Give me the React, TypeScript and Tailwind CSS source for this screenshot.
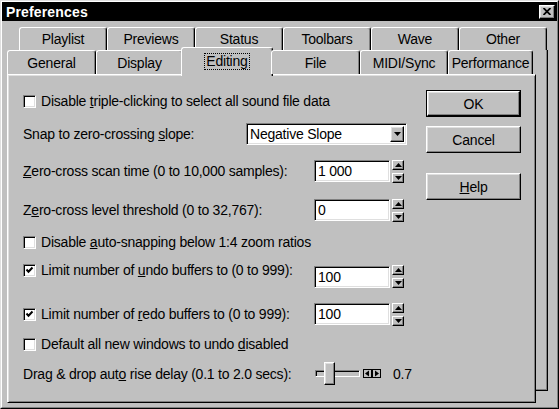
import { ReactNode } from "react";

const raised =
  "border border-t-white border-l-white border-r-black border-b-black shadow-[inset_-1px_-1px_0_#808080,inset_1px_1px_0_#dfdfdf]";
const raisedSmall =
  "border border-t-white border-l-white border-r-black border-b-black shadow-[inset_-1px_-1px_0_#808080]";
const sunken =
  "border border-t-[#808080] border-l-[#808080] border-r-white border-b-white shadow-[inset_1px_1px_0_#000,inset_-1px_-1px_0_#dfdfdf]";

const backTabs = ["Playlist", "Previews", "Status", "Toolbars", "Wave", "Other"];

const frontTabs = [
  { label: "General", w: "w-[89px]" },
  { label: "Display", w: "w-[87px]" },
  { label: "Editing", w: "w-[92px]", selected: true },
  { label: "File", w: "w-[89px]" },
  { label: "MIDI/Sync", w: "w-[88px]" },
  { label: "Performance", w: "w-[85px]" },
];

function Checkbox({ checked }: { checked?: boolean }) {
  return (
    <div className={`w-[13px] h-[13px] shrink-0 bg-white flex items-center justify-center ${sunken}`}>
      {checked && (
        <svg width="9" height="9" viewBox="0 0 9 9">
          <path d="M1.5 3.5 L3.5 5.8 L7.5 1.5" stroke="black" strokeWidth="2" fill="none" />
        </svg>
      )}
    </div>
  );
}

function Arrow({ dir }: { dir: "up" | "down" }) {
  return (
    <svg width="7" height="4" viewBox="0 0 7 4">
      <path d={dir === "up" ? "M3.5 0 L7 4 L0 4Z" : "M0 0 L7 0 L3.5 4Z"} fill="black" />
    </svg>
  );
}

function Spinner() {
  return (
    <div className="ml-[2px] flex flex-col gap-[3px]">
      <div className={`w-[12px] h-[10px] bg-[#c0c0c0] flex items-center justify-center ${raisedSmall}`}>
        <Arrow dir="up" />
      </div>
      <div className={`w-[12px] h-[10px] bg-[#c0c0c0] flex items-center justify-center ${raisedSmall}`}>
        <Arrow dir="down" />
      </div>
    </div>
  );
}

function NumberField({ value }: { value: string }) {
  return (
    <div className="flex items-center">
      <div className={`w-[76px] h-[22px] bg-white flex items-center pl-[3px] ${sunken}`}>{value}</div>
      <Spinner />
    </div>
  );
}

function CheckRow({ checked, children }: { checked?: boolean; children: ReactNode }) {
  return (
    <div className="flex items-center gap-[5px] h-[14px]">
      <Checkbox checked={checked} />
      <span className="whitespace-nowrap">{children}</span>
    </div>
  );
}

function Button({ children, def }: { children: ReactNode; def?: boolean }) {
  if (def) {
    return (
      <div className="w-[95px] h-[27px] border border-black">
        <div className={`w-full h-full flex items-center justify-center ${raised}`}>{children}</div>
      </div>
    );
  }
  return (
    <div className={`w-[95px] h-[27px] flex items-center justify-center ${raised}`}>{children}</div>
  );
}

export default function App() {
  return (
    <div className="w-[559px] h-[409px] bg-[#c0c0c0] text-black text-[14px] leading-[16px] tracking-[-0.22px] font-['Liberation_Sans',Arial,sans-serif] border border-t-[#dfdfdf] border-l-[#dfdfdf] border-r-black border-b-black">
      <div className="w-full h-full border border-t-white border-l-white border-r-[#808080] border-b-[#808080] flex flex-col">
        {/* Title bar */}
        <div className="h-[19px] bg-black flex items-center justify-between pl-[4px] pr-[2px]">
          <span className="text-white font-bold tracking-[0.15px]">Preferences</span>
          <div className={`w-[16px] h-[14px] bg-[#c0c0c0] flex items-center justify-center ${raised}`}>
            <svg width="8" height="7" viewBox="0 0 8 7">
              <path d="M0.5 0 L7.5 7 M7.5 0 L0.5 7" stroke="black" strokeWidth="1.8" />
            </svg>
          </div>
        </div>

        <div className="relative flex-1">
          {/* back row frame */}
          <div className="absolute left-[17px] top-[29px] w-[529px] h-[341px] border-r border-b border-r-black border-b-black shadow-[inset_-1px_-1px_0_#808080]" />

          {/* back tab row */}
          <div className="relative flex ml-[17px] mt-[6px] h-[23px]">
            {backTabs.map((t) => (
              <div
                key={t}
                className="w-[88px] h-[23px] flex items-center justify-center border-t border-l border-r border-t-white border-l-white border-r-black rounded-tl-[3px] rounded-tr-[3px] shadow-[inset_-1px_0_0_#808080] bg-[#c0c0c0]"
              >
                {t}
              </div>
            ))}
          </div>

          {/* front tab row */}
          <div className="relative z-10 flex items-end ml-[5px] h-[24px]">
            {frontTabs.map((t) =>
              t.selected ? (
                <div
                  key={t.label}
                  className={`${t.w} h-[29px] -mx-[2px] -mb-[2px] pb-[1px] flex items-center justify-center bg-[#c0c0c0] border-t border-l border-r border-t-white border-l-white border-r-black rounded-tl-[3px] rounded-tr-[3px] shadow-[inset_-1px_0_0_#808080]`}
                >
                  <span className="border border-dotted border-black px-[1px] leading-[15px]">{t.label}</span>
                </div>
              ) : (
                <div
                  key={t.label}
                  className={`${t.w} h-[24px] flex items-center justify-center bg-[#c0c0c0] border-t border-l border-r border-t-white border-l-white border-r-black rounded-tl-[3px] rounded-tr-[3px] shadow-[inset_-1px_0_0_#808080]`}
                >
                  {t.label}
                </div>
              )
            )}
          </div>

          {/* front panel */}
          <div className="relative ml-[5px] w-[529px] h-[329px] bg-[#c0c0c0] flex border border-t-white border-l-white border-r-black border-b-black shadow-[inset_1px_1px_0_#dfdfdf,inset_-1px_-1px_0_#808080]">
            <div className="w-[418px] pl-[15px] flex flex-col">
              <div className="mt-[19px]">
                <CheckRow>
                  Disable <u>t</u>riple-clicking to select all sound file data
                </CheckRow>
              </div>

              <div className="mt-[15px] h-[22px] flex items-center">
                <span className="w-[223px]">
                  Snap to zero-crossing <u>s</u>lope:
                </span>
                <div className={`w-[161px] h-[22px] bg-white flex items-center justify-between pl-[3px] pr-[2px] ${sunken}`}>
                  <span>Negative Slope</span>
                  <div className={`w-[14px] h-[16px] bg-[#c0c0c0] flex items-center justify-center ${raised}`}>
                    <Arrow dir="down" />
                  </div>
                </div>
              </div>

              <div className="mt-[15px] h-[22px] flex items-center">
                <span className="w-[291px]">
                  <u>Z</u>ero-cross scan time (0 to 10,000 samples):
                </span>
                <NumberField value="1 000" />
              </div>

              <div className="mt-[17px] h-[22px] flex items-center">
                <span className="w-[291px]">
                  Z<u>e</u>ro-cross level threshold (0 to 32,767):
                </span>
                <NumberField value="0" />
              </div>

              <div className="mt-[14px]">
                <CheckRow>
                  Disable <u>a</u>uto-snapping below 1:4 zoom ratios
                </CheckRow>
              </div>

              <div className="mt-[15px] h-[23px] flex items-start">
                <div className="w-[291px] mt-[-1px]">
                  <CheckRow checked>
                    Limit number of <u>u</u>ndo buffers to (0 to 999):
                  </CheckRow>
                </div>
                <div className="mt-[1px]">
                  <NumberField value="100" />
                </div>
              </div>

              <div className="mt-[16px] h-[22px] flex items-center">
                <div className="w-[291px]">
                  <CheckRow checked>
                    Limit number of <u>r</u>edo buffers to (0 to 999):
                  </CheckRow>
                </div>
                <NumberField value="100" />
              </div>

              <div className="mt-[12px]">
                <CheckRow>
                  Default all new windows to undo <u>d</u>isabled
                </CheckRow>
              </div>

              <div className="mt-[11px] h-[23px] flex items-center">
                <span className="w-[291px]">
                  Drag &amp; drop aut<u>o</u> rise delay (0.1 to 2.0 secs):
                </span>
                <div className="relative w-[45px] h-[23px] ml-[1px] flex items-center">
                  <div className="w-[45px] h-[7px] bg-[#c0c0c0] border border-t-[#808080] border-l-[#808080] border-r-white border-b-white shadow-[inset_1px_1px_0_#000]" />
                  <div className={`absolute left-[9px] top-0 w-[11px] h-[23px] bg-[#c0c0c0] ${raised}`} />
                </div>
                <div className="ml-[3px] flex items-center">
                  <svg width="18" height="9" viewBox="0 0 18 9">
                    <rect x="0.5" y="0.5" width="8" height="8" fill="#c0c0c0" stroke="black" />
                    <rect x="9.5" y="0.5" width="8" height="8" fill="#c0c0c0" stroke="black" />
                    <path d="M2 4.5 L6 1.5 L6 7.5Z" fill="black" />
                    <path d="M16 4.5 L12 1.5 L12 7.5Z" fill="black" />
                  </svg>
                </div>
                <span className="ml-[12px]">0.7</span>
              </div>
            </div>

            <div className="mt-[15px] flex flex-col">
              <Button def>OK</Button>
              <div className="mt-[9px]">
                <Button>Cancel</Button>
              </div>
              <div className="mt-[20px]">
                <Button>
                  <u>H</u>elp
                </Button>
              </div>
            </div>
          </div>
        </div>
      </div>
    </div>
  );
}
